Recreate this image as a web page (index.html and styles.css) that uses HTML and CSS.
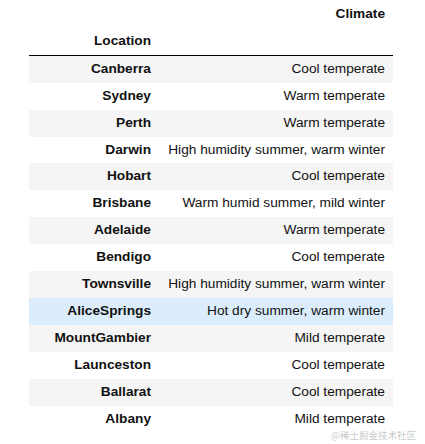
FILE: index.html
```html
<!DOCTYPE html>
<html>
<head>
<meta charset="utf-8">
<link rel="stylesheet" href="styles.css">
</head>
<body>
<div class="page">
<table class="df">
  <colgroup><col class="c-index"><col class="c-climate"></colgroup>
  <thead>
    <tr><th></th><th>Climate</th></tr>
    <tr class="last"><th>Location</th><th></th></tr>
  </thead>
  <tbody>
    <tr><th>Canberra</th><td>Cool temperate</td></tr>
    <tr><th>Sydney</th><td>Warm temperate</td></tr>
    <tr><th>Perth</th><td>Warm temperate</td></tr>
    <tr><th>Darwin</th><td>High humidity summer, warm winter</td></tr>
    <tr><th>Hobart</th><td>Cool temperate</td></tr>
    <tr><th>Brisbane</th><td>Warm humid summer, mild winter</td></tr>
    <tr><th>Adelaide</th><td>Warm temperate</td></tr>
    <tr><th>Bendigo</th><td>Cool temperate</td></tr>
    <tr><th>Townsville</th><td>High humidity summer, warm winter</td></tr>
    <tr class="hover"><th>AliceSprings</th><td>Hot dry summer, warm winter</td></tr>
    <tr><th>MountGambier</th><td>Mild temperate</td></tr>
    <tr><th>Launceston</th><td>Cool temperate</td></tr>
    <tr><th>Ballarat</th><td>Cool temperate</td></tr>
    <tr><th>Albany</th><td>Mild temperate</td></tr>
    <tr><th></th><td></td></tr>
  </tbody>
</table>
<div class="watermark">@稀土掘金技术社区</div>
</div>
</body>
</html>
```

FILE: styles.css
```css
html, body {
  margin: 0;
  padding: 0;
  background: #fff;
}
.page {
  position: relative;
  width: 425px;
  height: 444px;
  overflow: hidden;
  font-family: "Liberation Sans", Arial, sans-serif;
  font-size: 13.7px;
  color: #111;
}
.df {
  margin-left: 29px;
  margin-top: 1px;
  border-collapse: collapse;
  border-spacing: 0;
  table-layout: fixed;
  width: 364px;
}
.c-index { width: 130px; }
.c-climate { width: 234px; }
.df th, .df td {
  padding: 0 8px;
  line-height: 26.9px;
  text-align: right;
  vertical-align: middle;
  white-space: nowrap;
  border: none;
}
.df th { font-weight: bold; }
.df td { font-weight: normal; }
.df thead tr.last th {
  border-bottom: 1px solid #000;
}
.df tbody tr:nth-child(odd) { background: #f5f5f5; }
.df tbody tr.hover { background: #dbedfc; }
.watermark {
  position: absolute;
  left: 331px;
  top: 430px;
  font-family: "Noto Sans CJK SC", sans-serif;
  font-size: 9.5px;
  line-height: 11px;
  color: rgba(150, 150, 150, 0.55);
  white-space: nowrap;
}
```
